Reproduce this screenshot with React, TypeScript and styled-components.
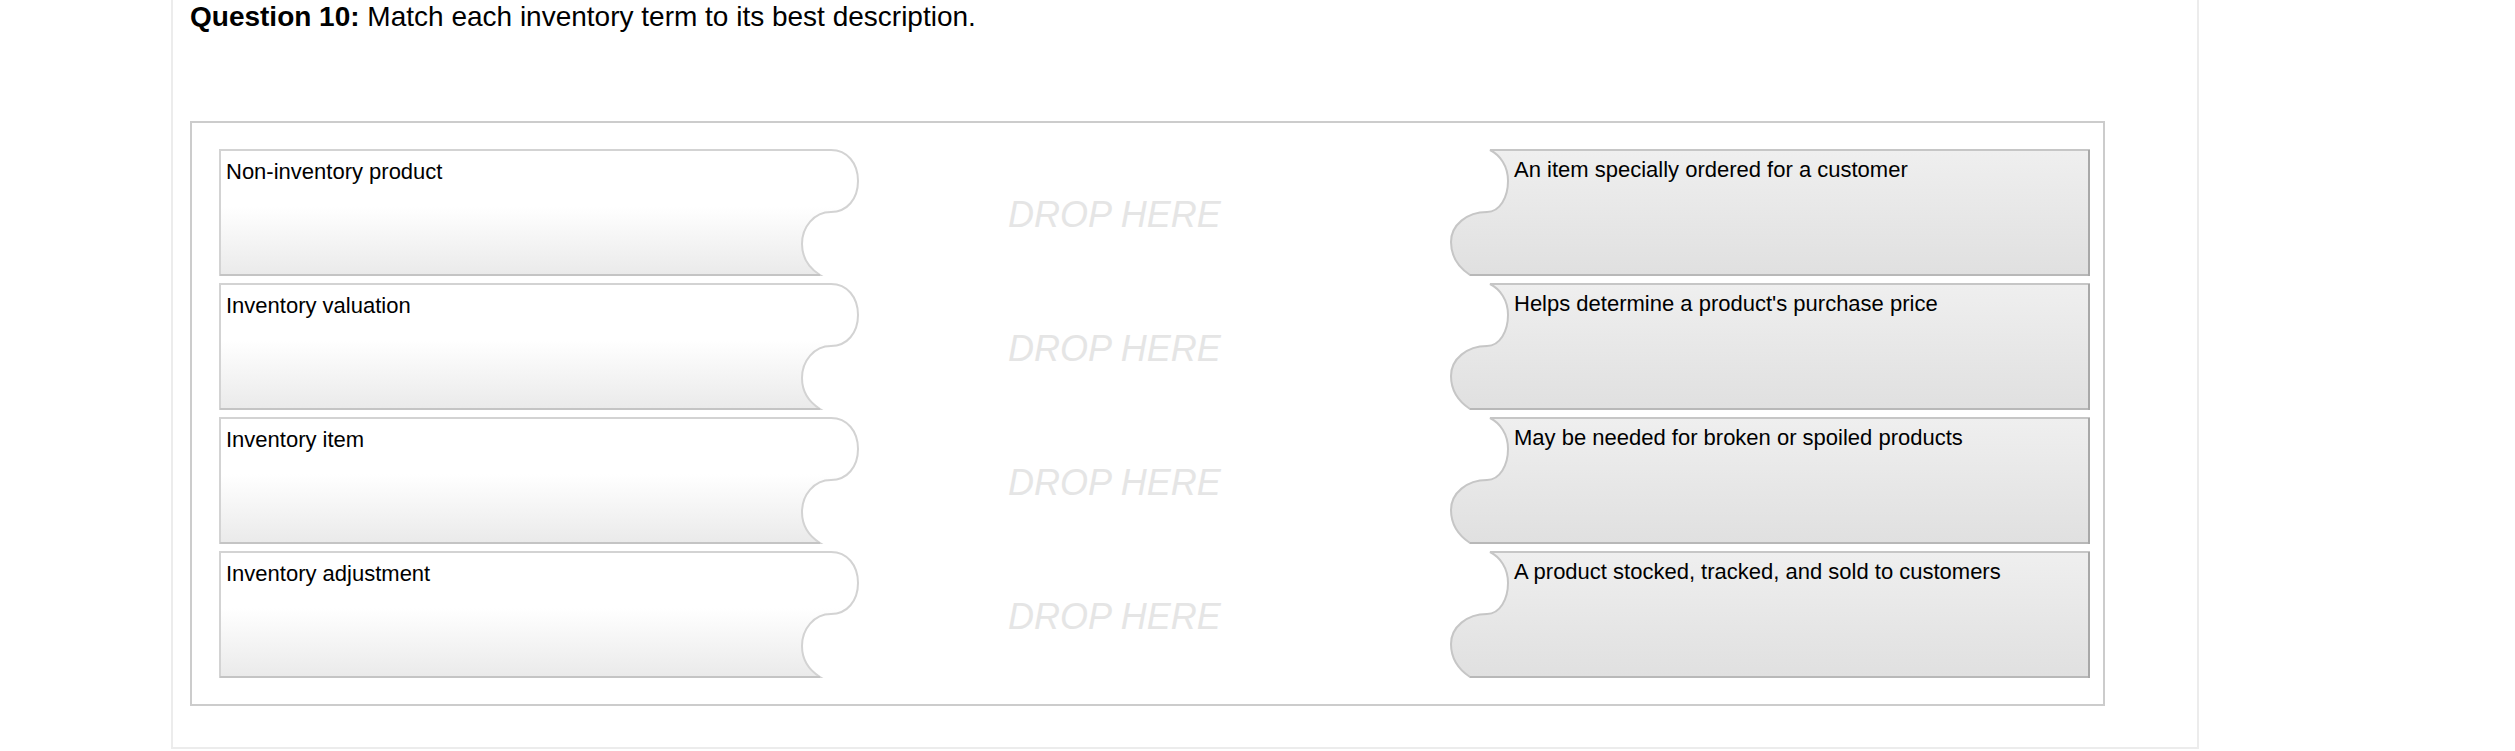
import React, { useId } from "react";
import styled, { createGlobalStyle } from "styled-components";

const GlobalStyle = createGlobalStyle`
  html, body {
    margin: 0;
    padding: 0;
    background: #ffffff;
  }
  body {
    font-family: "Liberation Sans", Arial, Helvetica, sans-serif;
    color: #000000;
  }
`;

const Page = styled.div`
  padding-left: 171px;
`;

const Card = styled.div`
  width: 2028px;
  box-sizing: border-box;
  border: 2px solid #ececec;
  border-top: none;
  padding: 0 0 41px 17px;
`;

const Title = styled.h2`
  margin: 0;
  padding-top: 1px;
  font-size: 28px;
  line-height: 32px;
  font-weight: normal;
  strong {
    font-weight: bold;
  }
`;

const Panel = styled.div`
  margin-top: 88px;
  width: 1915px;
  box-sizing: border-box;
  border: 2px solid #cccccc;
  padding: 26px 13px 26px 27px;
  display: grid;
  grid-template-columns: 640px 1fr 640px;
  grid-auto-rows: 127px;
  row-gap: 7px;
`;

const Tile = styled.div<{ $side: "left" | "right" }>`
  position: relative;
  width: 640px;
  height: 127px;
  box-sizing: border-box;
  padding: ${(p) => (p.$side === "left" ? "10px 0 0 7px" : "8px 0 0 64px")};
  font-size: 22px;
  line-height: 25px;
  svg {
    position: absolute;
    left: 0;
    top: 0;
  }
  span {
    position: relative;
  }
`;

const DropZone = styled.div`
  display: flex;
  align-items: center;
  padding: 4px 0 0 149px;
  font-size: 36px;
  font-style: italic;
  color: #e5e5e5;
  user-select: none;
`;

const TermShape = () => {
  const id = useId();
  return (
    <svg width="640" height="127" viewBox="0 0 640 127">
      <defs>
        <linearGradient id={id} x1="0" y1="0" x2="0" y2="1">
          <stop offset="0.45" stopColor="#ffffff" />
          <stop offset="1" stopColor="#eaeaea" />
        </linearGradient>
      </defs>
      <path
        d="M1,1 H612 C628,1 639,14 639,32 C639,50 628,63 612,63 C595,63 583,78 583,95 C583,108 590,119 601,126 H1 Z"
        fill={`url(#${id})`}
        stroke="#d3d3d3"
        strokeWidth="2"
      />
      <line x1="1" y1="126" x2="601" y2="126" stroke="#c4c4c4" strokeWidth="2" />
    </svg>
  );
};

const AnswerShape = () => {
  const id = useId();
  return (
    <svg width="640" height="127" viewBox="0 0 640 127">
      <defs>
        <linearGradient id={id} x1="0" y1="0" x2="0" y2="1">
          <stop offset="0" stopColor="#efefef" />
          <stop offset="1" stopColor="#e0e0e0" />
        </linearGradient>
      </defs>
      <path
        d="M40,1 H639 V126 H20 C8,118 1,107 1,93 C1,76 17,63 37,63 C50,63 58,48 58,32 C58,17 50,6 40,1 Z"
        fill={`url(#${id})`}
        stroke="#c6c6c6"
        strokeWidth="2"
      />
      <line x1="20" y1="126" x2="639" y2="126" stroke="#b8b8b8" strokeWidth="2" />
      <line x1="639" y1="1" x2="639" y2="127" stroke="#a8a8a8" strokeWidth="2" />
    </svg>
  );
};

const rows = [
  { term: "Non-inventory product", answer: "An item specially ordered for a customer" },
  { term: "Inventory valuation", answer: "Helps determine a product's purchase price" },
  { term: "Inventory item", answer: "May be needed for broken or spoiled products" },
  { term: "Inventory adjustment", answer: "A product stocked, tracked, and sold to customers" },
];

const App = () => {
  return (
    <Page>
      <GlobalStyle />
      <Card>
        <Title>
          <strong>Question 10:</strong> Match each inventory term to its best description.
        </Title>
        <Panel>
          {rows.map((row) => (
            <React.Fragment key={row.term}>
              <Tile $side="left">
                <TermShape />
                <span>{row.term}</span>
              </Tile>
              <DropZone>DROP HERE</DropZone>
              <Tile $side="right">
                <AnswerShape />
                <span>{row.answer}</span>
              </Tile>
            </React.Fragment>
          ))}
        </Panel>
      </Card>
    </Page>
  );
};

export default App;
